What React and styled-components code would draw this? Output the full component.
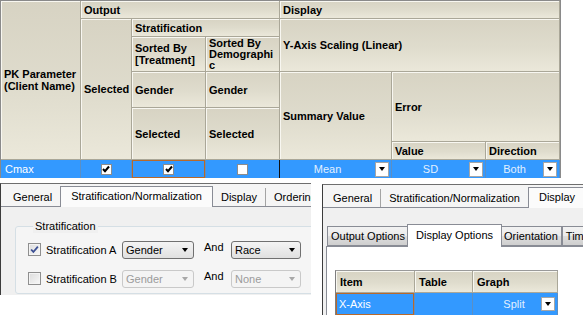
import React from "react";
import styled, { createGlobalStyle } from "styled-components";

const GlobalStyle = createGlobalStyle`
  html, body {
    margin: 0;
    padding: 0;
    background: #fff;
  }
  body {
    font-family: "Liberation Sans", Arial, sans-serif;
    font-size: 11px;
    overflow: hidden;
  }
  * {
    box-sizing: border-box;
  }
`;

const HEADER_BG = "linear-gradient(180deg, #d7d3c3 0%, #dfdccd 55%, #ebe8da 100%)";
const SELECT_BLUE = "#3399ff";

const Page = styled.div`
  width: 583px;
  height: 315px;
  display: flex;
  flex-direction: column;
  overflow: hidden;
`;

/* ---------- top grid ---------- */

const Grid = styled.div`
  display: grid;
  grid-template-columns: 80px 51px 74px 74px 112px 94px 74px;
  grid-template-rows: 18px 18px 35px 36px 34px 18px 18px;
  width: 561px;
  border: 1px solid #8a8a8a;
  border-bottom: none;
  flex-shrink: 0;
`;

const HeadCell = styled.div`
  grid-column: ${({ $col }) => $col};
  grid-row: ${({ $row }) => $row};
  display: flex;
  align-items: center;
  padding: 0 1px 0 3px;
  font-weight: bold;
  line-height: ${({ $tight }) => ($tight ? "11px" : "12px")};
  color: #000;
  background: ${HEADER_BG};
  border-right: 1px solid #aaa798;
  border-bottom: 1px solid #aaa798;
  box-shadow: inset 1px 1px 0 #f8f7f1;
  overflow-wrap: ${({ $tight }) => ($tight ? "anywhere" : "normal")};
  padding-right: ${({ $tight }) => ($tight ? "3px" : "1px")};
  overflow: hidden;
`;

const DataCell = styled.div`
  grid-column: ${({ $col }) => $col};
  grid-row: 7;
  display: flex;
  align-items: center;
  justify-content: ${({ $center }) => ($center ? "center" : "flex-start")};
  padding: 0 ${({ $combo }) => ($combo ? "2px 0 0" : "4px")};
  background: ${SELECT_BLUE};
  color: #fff;
  border-right: 1px solid ${({ $sep }) => $sep || "#5b8fc4"};
  box-shadow: ${({ $focus }) => ($focus ? "inset 0 0 0 1px #b8692b" : "none")};
`;

const ComboText = styled.span`
  flex: 1;
  text-align: center;
  color: #e2f0ff;
  padding-left: ${({ $offset }) => $offset || 0}px;
`;

const DropButton = styled.span`
  width: 14px;
  height: ${({ $h }) => $h || 15}px;
  background: #fff;
  border: 1px solid #a6a6a6;
  display: flex;
  align-items: center;
  justify-content: center;
  flex-shrink: 0;

  &::after {
    content: "";
    border-left: 3.5px solid transparent;
    border-right: 3.5px solid transparent;
    border-top: 4px solid #000;
  }
`;

const GridCheck = styled.span`
  width: 11px;
  height: 11px;
  background: #fff;
  border: 1px solid #8c8c8c;
  display: flex;
  align-items: center;
  justify-content: center;
`;

const Tick = ({ color = "#000", size = 8, stroke = 2 }) => (
  <svg width={size} height={size} viewBox="0 0 8 8">
    <polyline
      points="1,4 3,6.2 7,1.5"
      fill="none"
      stroke={color}
      strokeWidth={stroke}
    />
  </svg>
);

/* ---------- window shots ---------- */

const Shots = styled.div`
  display: flex;
  align-items: flex-start;
  margin-top: 5px;
`;

const Window = styled.div`
  width: ${({ $w }) => $w}px;
  height: ${({ $h }) => $h}px;
  margin-left: ${({ $ml }) => $ml || 0}px;
  margin-top: ${({ $mt }) => $mt || 0}px;
  border-left: 1px solid #3c3c3c;
  border-top: 1px solid #6e6e6e;
  background: #f0f0f0;
  display: flex;
  flex-direction: column;
  overflow: hidden;
  flex-shrink: 0;
`;

const TabStrip = styled.div`
  display: flex;
  align-items: flex-end;
  height: 23px;
  padding-left: ${({ $pad }) => $pad}px;
  border-bottom: 1px solid #898c95;
  background: #f5f5f5;
  flex-shrink: 0;
`;

const Tab = styled.div`
  display: flex;
  align-items: center;
  white-space: nowrap;
  color: #000;
  height: ${({ $active }) => ($active ? "21px" : "18px")};
  padding: ${({ $active }) => ($active ? "0 10px 2px" : "0 8px")};
  margin-bottom: ${({ $active }) => ($active ? "-1px" : "0")};
  background: ${({ $active }) => ($active ? "#fbfbfb" : "transparent")};
  border: ${({ $active }) => ($active ? "1px solid #898c95" : "none")};
  border-bottom: none;
  border-left: ${({ $active, $sep }) =>
    $active ? "1px solid #898c95" : $sep ? "1px solid #a4a4a4" : "none"};
`;

const TabBody = styled.div`
  flex: 1;
  display: flex;
  flex-direction: column;
  padding: ${({ $pad }) => $pad};
  background: #f0f0f0;
`;

const GroupBox = styled.fieldset`
  margin: 0 0 0 14px;
  padding: 2px 0 0 12px;
  width: 330px;
  border: 1px solid #d5dfe5;
  border-radius: 3px;
  background: #f5f5f5;
`;

const Legend = styled.legend`
  margin-left: 5px;
  padding: 0 2px;
  line-height: 13px;
  color: #000;
  background: #f0f0f0;
`;

const OptionRow = styled.div`
  display: grid;
  grid-template-columns: 94px 72px 37px 70px;
  align-items: center;
  height: 29px;
`;

const CheckLabel = styled.label`
  display: flex;
  align-items: center;
  gap: 5px;
  color: #000;
`;

const WinCheck = styled.span`
  width: 13px;
  height: 13px;
  border: 1px solid #8f8f8f;
  background: linear-gradient(135deg, #dcdcdc, #f8f8f8);
  box-shadow: inset 0 0 0 1px #f4f4f4;
  display: flex;
  align-items: center;
  justify-content: center;
`;

const Combo = styled.div`
  width: ${({ $w }) => $w}px;
  height: 18px;
  display: flex;
  align-items: center;
  justify-content: space-between;
  padding: 0 5px 0 3px;
  border: 1px solid ${({ $disabled }) => ($disabled ? "#c9c9c9" : "#707070")};
  border-radius: 3px;
  background: ${({ $disabled }) =>
    $disabled ? "#f4f4f4" : "linear-gradient(180deg, #f4f4f4 0%, #eaeaea 50%, #e0e0e0 100%)"};
  color: ${({ $disabled }) => ($disabled ? "#9b9b9b" : "#000")};

  &::after {
    content: "";
    border-left: 3.5px solid transparent;
    border-right: 3.5px solid transparent;
    border-top: 4px solid ${({ $disabled }) => ($disabled ? "#a8a8a8" : "#000")};
  }
`;

const AndText = styled.span`
  padding: 0 0 6px 10px;
  color: #000;
`;

/* inner tabs (right shot) */

const InnerStrip = styled.div`
  display: flex;
  align-items: flex-end;
  height: 23px;
  padding-left: 1px;
  flex-shrink: 0;
`;

const InnerTab = styled.div`
  position: relative;
  z-index: ${({ $active }) => ($active ? 1 : 0)};
  display: flex;
  align-items: center;
  white-space: nowrap;
  height: ${({ $active }) => ($active ? "23px" : "20px")};
  padding: 0 ${({ $active }) => ($active ? "8px" : "3px")} ${({ $active }) => ($active ? "3px" : "0")};
  margin: 0 ${({ $active }) => ($active ? "-2px" : "0")} ${({ $active }) => ($active ? "-1px" : "0")};
  border: 1px solid #898c95;
  border-bottom: ${({ $active }) => ($active ? "none" : "1px solid #898c95")};
  background: ${({ $active }) =>
    $active ? "#fff" : "linear-gradient(180deg, #f2f2f2 0%, #ebebeb 50%, #dddddd 51%, #cfcfcf 100%)"};
  color: #000;
`;

const InnerPage = styled.div`
  flex: 1;
  background: #fff;
  border-left: 1px solid #898c95;
  border-top: 1px solid #898c95;
  padding: 23px 0 0 8px;
`;

const SmallGrid = styled.div`
  display: grid;
  grid-template-columns: 79px 58px 85px;
  grid-template-rows: 22px 22px;
  width: 223px;
  border-left: 1px solid #7e7e7e;
  border-top: 1px solid #9a9a9a;
`;

const SmallHead = styled.div`
  display: flex;
  align-items: center;
  padding: 0 4px;
  font-weight: bold;
  color: #000;
  background: ${HEADER_BG};
  border-right: 1px solid #aaa798;
  border-bottom: 1px solid #aaa798;
  box-shadow: inset 1px 1px 0 #f8f7f1;
`;

const SmallData = styled.div`
  display: flex;
  align-items: center;
  padding: ${({ $combo }) => ($combo ? "0 2px 0 0" : "0 3px")};
  background: ${SELECT_BLUE};
  color: #fff;
  border-right: 1px solid #5b8fc4;
  box-shadow: ${({ $focus }) => ($focus ? "inset 0 0 0 1px #b8692b" : "none")};
`;

const App = () => {
  return (
    <Page>
      <GlobalStyle />
      <Grid>
        <HeadCell $col="1" $row="1 / 7">
          PK Parameter (Client Name)
        </HeadCell>
        <HeadCell $col="2 / 5" $row="1">Output</HeadCell>
        <HeadCell $col="5 / 8" $row="1">Display</HeadCell>
        <HeadCell $col="2" $row="2 / 7">Selected</HeadCell>
        <HeadCell $col="3 / 5" $row="2">Stratification</HeadCell>
        <HeadCell $col="5 / 8" $row="2 / 4">Y-Axis Scaling (Linear)</HeadCell>
        <HeadCell $col="3" $row="3">Sorted By [Treatment]</HeadCell>
        <HeadCell $col="4" $row="3" $tight>
          Sorted By Demographic
        </HeadCell>
        <HeadCell $col="3" $row="4">Gender</HeadCell>
        <HeadCell $col="4" $row="4">Gender</HeadCell>
        <HeadCell $col="5" $row="4 / 7">Summary Value</HeadCell>
        <HeadCell $col="6 / 8" $row="4 / 6">Error</HeadCell>
        <HeadCell $col="3" $row="5 / 7">Selected</HeadCell>
        <HeadCell $col="4" $row="5 / 7">Selected</HeadCell>
        <HeadCell $col="6" $row="6">Value</HeadCell>
        <HeadCell $col="7" $row="6">Direction</HeadCell>

        <DataCell $col="1">Cmax</DataCell>
        <DataCell $col="2" $center>
          <GridCheck>
            <Tick />
          </GridCheck>
        </DataCell>
        <DataCell $col="3" $center $focus>
          <GridCheck>
            <Tick />
          </GridCheck>
        </DataCell>
        <DataCell $col="4" $center $sep="#111">
          <GridCheck />
        </DataCell>
        <DataCell $col="5" $combo>
          <ComboText>Mean</ComboText>
          <DropButton />
        </DataCell>
        <DataCell $col="6" $combo>
          <ComboText>SD</ComboText>
          <DropButton />
        </DataCell>
        <DataCell $col="7" $combo>
          <ComboText>Both</ComboText>
          <DropButton />
        </DataCell>
      </Grid>

      <Shots>
        <Window $w={311} $h={112}>
          <TabStrip $pad={4}>
            <Tab>General</Tab>
            <Tab $active>Stratification/Normalization</Tab>
            <Tab>Display</Tab>
            <Tab $sep>Ordering</Tab>
          </TabStrip>
          <TabBody $pad="13px 0 0 0">
            <GroupBox>
              <Legend>Stratification</Legend>
              <OptionRow>
                <CheckLabel>
                  <WinCheck>
                    <Tick color="#3b4f93" size={9} stroke={1.6} />
                  </WinCheck>
                  Stratification A
                </CheckLabel>
                <Combo $w={72}>Gender</Combo>
                <AndText>And</AndText>
                <Combo $w={70}>Race</Combo>
              </OptionRow>
              <OptionRow>
                <CheckLabel>
                  <WinCheck />
                  Stratification B
                </CheckLabel>
                <Combo $w={72} $disabled>
                  Gender
                </Combo>
                <AndText>And</AndText>
                <Combo $w={70} $disabled>
                  None
                </Combo>
              </OptionRow>
            </GroupBox>
          </TabBody>
        </Window>

        <Window $w={261} $h={132} $ml={11} $mt={1}>
          <TabStrip $pad={2}>
            <Tab>General</Tab>
            <Tab $sep>Stratification/Normalization</Tab>
            <Tab $active>Display</Tab>
          </TabStrip>
          <TabBody $pad="15px 0 0 3px">
            <InnerStrip>
              <InnerTab>Output Options</InnerTab>
              <InnerTab $active>Display Options</InnerTab>
              <InnerTab>Orientation</InnerTab>
              <InnerTab>Timing</InnerTab>
            </InnerStrip>
            <InnerPage>
              <SmallGrid>
                <SmallHead>Item</SmallHead>
                <SmallHead>Table</SmallHead>
                <SmallHead>Graph</SmallHead>
                <SmallData $focus>X-Axis</SmallData>
                <SmallData />
                <SmallData $combo>
                  <ComboText $offset={14}>Split</ComboText>
                  <DropButton $h={14} />
                </SmallData>
              </SmallGrid>
            </InnerPage>
          </TabBody>
        </Window>
      </Shots>
    </Page>
  );
};

export default App;
